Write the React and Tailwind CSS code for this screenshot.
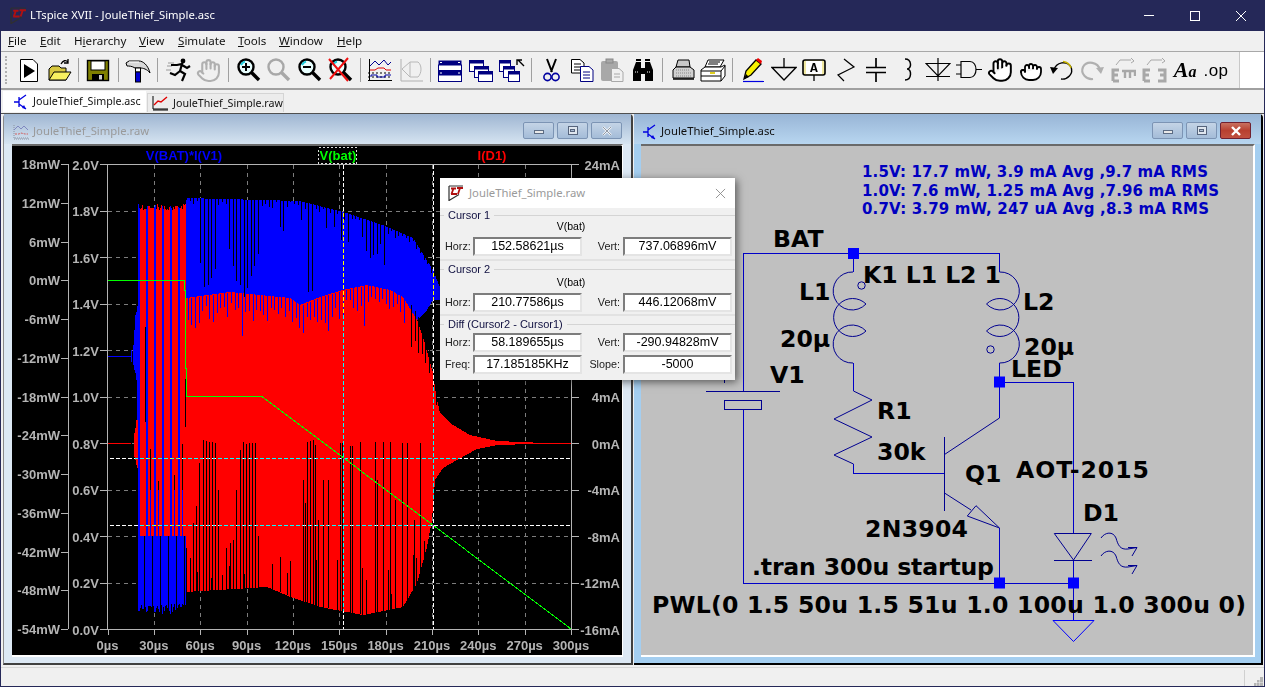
import React from 'react'
import { Hand, Grab } from 'lucide-react'

const UI = "font-['Noto_Sans',sans-serif]"
const AR = "font-['Liberation_Sans',sans-serif]"

// ---- waveform data ----
function interp(pts, x) {
  if (x <= pts[0][0]) return pts[0][1]
  for (let i = 1; i < pts.length; i++) {
    if (x <= pts[i][0]) {
      const [x0, y0] = pts[i - 1]
      const [x1, y1] = pts[i]
      return y0 + ((y1 - y0) * (x - x0)) / (x1 - x0)
    }
  }
  return pts[pts.length - 1][1]
}

const blueTop = [[186, 198], [300, 201], [343, 212], [383, 225], [413, 238], [433, 270], [445, 300]]
const blueBot = [[186, 340], [403, 312], [417, 320], [427, 310], [433, 300], [445, 300]]
const redTop = [[186, 298], [230, 292], [290, 298], [300, 305], [320, 297], [343, 290], [367, 285], [390, 290], [403, 297], [417, 320], [423, 337], [433, 373], [436, 395], [440, 413], [453, 425], [470, 435], [497, 441], [533, 442.5], [571, 443]]
const redBot = [[186, 592], [267, 587], [293, 598], [320, 607], [363, 615], [403, 607], [417, 583], [427, 547], [432, 520], [435, 480], [443, 468], [457, 460], [477, 449], [497, 445], [533, 444], [571, 444]]

const tallSpikes = [
  [193, 523], [196, 506], [199, 463], [203, 440], [206, 441], [209, 442], [212, 442], [215, 443], [218, 490],
  [230, 543], [233, 540], [236, 490], [240, 450], [243, 442], [246, 444], [249, 443], [252, 443], [255, 443], [258, 536],
  [303, 480], [305, 503], [307, 442], [310, 441], [313, 440], [315, 445], [318, 520],
  [323, 480], [328, 480], [340, 443], [342, 443], [350, 446], [352, 446], [360, 442], [375, 442], [377, 480],
  [383, 442], [390, 442], [395, 500], [402, 443], [407, 443], [414, 520], [420, 443]
]
const topClusters = [[208, 10, 296], [244, 15, 298], [310, 5, 303], [372, 10, 260]]

function vl(x, y1, y2) {
  return `M${Math.round(x) + 0.5} ${Math.round(y1)}V${Math.round(y2)}`
}

function buildTraces() {
  let seed = 4711
  const rnd = () => {
    seed = (seed * 16807) % 2147483647
    return seed / 2147483647
  }
  let blue = ''
  let red = ''
  let black = ''

  // lead-in before the oscillator starts
  blue += 'M108 356.5H131' + vl(131, 350, 362) + vl(133, 345, 365) + vl(134, 330, 370) + vl(135, 315, 373) + vl(136, 312, 380) + vl(137, 306, 420)
  red += 'M108 443.5H131' + vl(134, 433, 457) + vl(135, 428, 460) + vl(136, 420, 465) + vl(137, 410, 468)

  // start-up burst, striped
  for (let x = 138; x < 186; x++) {
    const p = (x - 138) % 8
    const tip = 204 + rnd() * 6
    if (p === 0 || p === 1) {
      blue += vl(x, tip, 604 + rnd() * 10)
    } else if (p === 4 && rnd() > 0.4) {
      red += vl(x, tip, 430 + rnd() * 60)
      blue += vl(x, 490, 536)
      blue += vl(x, 536, 600 + rnd() * 12)
    } else {
      red += vl(x, tip, 536)
      if (p === 6) black += vl(x, 536, 612)
      else blue += vl(x, 536, 604 + rnd() * 8)
      if (p === 7 && rnd() > 0.7) black += vl(x, 300 + rnd() * 100, 400 + rnd() * 80)
    }
  }

  // the long decaying part
  for (let x = 186; x < 438; x += 3.6) {
    const top = interp(blueTop, x)
    let len = rnd() > 0.85 ? 15 + rnd() * 25 : 1 + rnd() * 7
    for (const [c, hw, tipY] of topClusters) {
      const d = Math.abs(x - c) / hw
      if (d <= 1) len = Math.max(len, (tipY - top) * (1 - d * d * 0.5) * (0.85 + rnd() * 0.15))
    }
    black += vl(x, top, top + len)
    if (x < 405) blue += vl(x + 1.8, interp(redTop, x), interp(redTop, x) + 10 + rnd() * (rnd() > 0.75 ? 34 : 18))
    else if (x > 408) black += vl(x + 1.8, interp(redTop, x) - 2, interp(redTop, x) + 12 + rnd() * 30)
    if (x < 425 && rnd() > 0.55) {
      const bot = interp(redBot, x)
      black += vl(x, bot - 10 - rnd() * 40, bot)
    }
  }
  for (const [x, y] of tallSpikes) black += vl(x, y, interp(redBot, x))

  const poly = (a, b) => 'M' + a.map((p) => p.join(' ')).join('L') + 'L' + [...b].reverse().map((p) => p.join(' ')).join('L') + 'Z'
  return { blue, red, black, bluePoly: poly(blueTop, blueBot), redPoly: poly(redTop, redBot) }
}

const traces = buildTraces()

const mwTicks = [18, 12, 6, 0, -6, -12, -18, -24, -30, -36, -42, -48, -54]
const vTicks = ['2.0', '1.8', '1.6', '1.4', '1.2', '1.0', '0.8', '0.6', '0.4', '0.2', '0.0']
const maTicks = [24, 20, 16, 12, 8, 4, 0, -4, -8, -12, -16]
const timeTicks = [0, 30, 60, 90, 120, 150, 180, 210, 240, 270, 300]
const tx = (t) => 107.5 + t * 1.545
const vy = (i) => 164.5 + i * 46.5

function Chart() {
  return (
    <svg viewBox="12 146 610 509" className="block w-[610px] h-[509px]">
      <rect x="12" y="146" width="610" height="509" fill="#000" />
      <g shapeRendering="crispEdges">
        <g stroke="#7d7d7d" strokeDasharray="4 4" fill="none">
          {timeTicks.slice(1, -1).map((t) => <path key={t} d={`M${Math.round(tx(t)) + 0.5} 165V629`} />)}
          {vTicks.slice(1, -1).map((v, i) => <path key={v} d={`M108 ${Math.floor(vy(i + 1)) + 0.5}H571`} />)}
        </g>
        <path d={traces.bluePoly} fill="#0000ff" />
        <path d={traces.blue} stroke="#0000ff" fill="none" />
        <path d={traces.redPoly} fill="#ff0000" />
        <path d={traces.red} stroke="#ff0000" fill="none" />
        <path d={traces.blue} stroke="#0000ff" fill="none" />
        <path d={traces.black} stroke="#000" fill="none" />
        <path d="M107.5 280.5H184V290H185V368H186.5V396.5H262L571 629" stroke="#00ff00" fill="none" />
        <g stroke="#b4b4b4" fill="none">
          <path d="M68.5 164V629M61 164.5H68M61 629.5H68" />
          <path d="M107.5 164V629.5H571.5V164M100 164.5H571" />
          {mwTicks.map((m, i) => <path key={m} d={`M61 ${Math.floor(164.5 + i * 38.75) + 0.5}H68`} />)}
          {vTicks.map((v, i) => <path key={v} d={`M100 ${Math.floor(vy(i)) + 0.5}H107`} />)}
          {maTicks.map((m, i) => <path key={m} d={`M572 ${Math.floor(vy(i)) + 0.5}H579`} />)}
          {timeTicks.map((t) => <path key={t} d={`M${Math.round(tx(t)) + 0.5} 630V635`} />)}
        </g>
        <g stroke="#fff" strokeDasharray="4 2" fill="none" className="mix-blend-difference">
          <path d="M343.5 165V629" />
          <path d="M433.5 165V629" />
          <path d="M110 458.5H571" />
          <path d="M110 525.5H571" />
        </g>
        <rect x="318.5" y="147.5" width="38" height="16" fill="#000" stroke="#ddd" strokeDasharray="2 2" />
      </g>
      <g className={AR} fontSize="13" fontWeight="700">
        <g fill="#b4b4b4">
          {mwTicks.map((m, i) => <text key={m} x="60" y={169 + i * 38.75} textAnchor="end">{m}mW</text>)}
          {vTicks.map((v, i) => <text key={v} x="99" y={vy(i) + 5} textAnchor="end">{v}V</text>)}
          {maTicks.map((m, i) => (vy(i) > 178 && vy(i) < 380 ? null : <text key={m} x="620" y={vy(i) + 5} textAnchor="end">{m}mA</text>))}
          {timeTicks.map((t) => <text key={t} x={tx(t)} y="650" textAnchor="middle">{t}µs</text>)}
        </g>
        <text x="184" y="160" textAnchor="middle" fill="#0000ff">V(BAT)*I(V1)</text>
        <text x="338" y="160" textAnchor="middle" fill="#00ff00">V(bat)</text>
        <text x="492" y="160" textAnchor="middle" fill="#ff0000">I(D1)</text>
      </g>
    </svg>
  )
}

// ---- schematic ----
const coil = (cx, dir) => {
  const s = dir < 0 ? 0 : 1
  const d = 13 * dir * -1
  return `M${cx} 272A19 19 0 1 ${s} ${cx + d} 304A19 19 0 1 ${s} ${cx + d} 331A19 19 0 1 ${s} ${cx} 363`
}

function Junction({ x, y }) {
  return <rect x={x - 5.5} y={y - 5.5} width="11" height="11" fill="#0000ff" />
}

function Label({ x, y, w, children }) {
  return <text x={x} y={y} fontSize="23.6" fontWeight="700" fill="#000" textLength={w} lengthAdjust={w ? 'spacing' : undefined}>{children}</text>
}

function Schematic() {
  return (
    <svg viewBox="641 146 612 509" className="block w-[612px] h-[509px] font-['DejaVu_Sans',sans-serif]">
      <rect x="641" y="146" width="612" height="509" fill="#c0c0c0" />
      <g fill="none" stroke="#0000c8" shapeRendering="crispEdges">
        <path d="M743.5 391V253.5H999.5V272" />
        <path d="M853.5 253.5V272" />
        <path d="M853.5 363V391" />
        <path d="M999.5 363V418" />
        <path d="M999.5 382H1073.5V533" />
        <path d="M743.5 409V583.5H1073.5" />
        <path d="M999.5 528V583" />
        <path d="M1073.5 560V620" />
        <path d="M853.5 464V473.5H944" />
      </g>
      <g fill="none" stroke="#000090">
        <path d={coil(853, -1)} />
        <path d={coil(999.5, 1)} />
        <circle cx="861.5" cy="285.5" r="3.7" />
        <circle cx="990.5" cy="349.5" r="3.7" />
        <path d="M706 391.5H780" shapeRendering="crispEdges" />
        <rect x="724.5" y="400.5" width="37" height="9" shapeRendering="crispEdges" />
        <path d="M724.5 379V383" shapeRendering="crispEdges" />
        <path d="M853.5 391L872 400L834 419L872 437L834 455L853.5 464" />
        <path d="M944.5 437V511" shapeRendering="crispEdges" />
        <path d="M944.5 454.5L999.5 418" />
        <path d="M944.5 493L971 510" />
        <path d="M976 505.7L967.3 516L999.5 528Z" />
        <path d="M1054.3 533.5H1091.3L1073.5 560Z" />
        <path d="M1054 560.5H1092" shapeRendering="crispEdges" />
        <path d="M1101 538C1105 532 1113 531 1116 538C1118 545 1120 550 1128 549L1137 547.5M1137 547.5L1128 547.5M1137 547.5L1132 556" />
        <path d="M1101 556C1105 550 1113 549 1116 556C1118 563 1120 568 1128 567L1137 565.5M1137 565.5L1128 565.5M1137 565.5L1132 574" />
      </g>
      <path d="M1053 620.5H1094L1073.5 641.5Z" fill="none" stroke="#0000ff" />
      <Junction x={853.5} y={253.5} />
      <Junction x={999.5} y={382} />
      <Junction x={999.5} y={583} />
      <Junction x={1073.5} y={583} />
      <g fontSize="15" fontWeight="700" fill="#0000c0">
        <text x="862" y="177" textLength="346" lengthAdjust="spacing">1.5V: 17.7 mW, 3.9 mA Avg ,9.7 mA RMS</text>
        <text x="862" y="196" textLength="357" lengthAdjust="spacing">1.0V: 7.6 mW, 1.25 mA Avg ,7.96 mA RMS</text>
        <text x="862" y="214" textLength="347" lengthAdjust="spacing">0.7V: 3.79 mW, 247 uA Avg ,8.3 mA RMS</text>
      </g>
      <Label x={773} y={247}>BAT</Label>
      <Label x={863} y={283} w={138}>K1 L1 L2 1</Label>
      <Label x={799} y={300}>L1</Label>
      <Label x={780} y={347}>20µ</Label>
      <Label x={1023} y={310}>L2</Label>
      <Label x={1024} y={355}>20µ</Label>
      <Label x={1011} y={377}>LED</Label>
      <Label x={770} y={383}>V1</Label>
      <Label x={877} y={419}>R1</Label>
      <Label x={877} y={460}>30k</Label>
      <Label x={965} y={482}>Q1</Label>
      <Label x={1016} y={478} w={133}>AOT-2015</Label>
      <Label x={1083} y={521}>D1</Label>
      <Label x={865} y={537} w={103}>2N3904</Label>
      <Label x={752} y={575} w={242}>.tran 300u startup</Label>
      <Label x={652} y={613} w={594}>PWL(0 1.5 50u 1.5 51u 1.0 100u 1.0 300u 0)</Label>
    </svg>
  )
}

// ---- toolbar icons ----
const Ic = ({ children, w = 26, h = 26 }) => (
  <svg viewBox={`0 0 ${w} ${h}`} width={w} height={h} className="block">{children}</svg>
)

const Lens = ({ gray, children }) => {
  const c = gray ? '#a8a8a8' : '#000'
  return (
    <Ic>
      <circle cx="10" cy="10" r="7.5" fill={gray ? '#f0f0f0' : '#e8ffff'} stroke={c} strokeWidth="2.4" />
      <path d="M15.5 15.5L23 23" stroke={c} strokeWidth="3.4" />
      {!gray && <path d="M5 8C6 6 7 5 9 4.5" stroke="#20d0e0" strokeWidth="2" fill="none" />}
      {children}
    </Ic>
  )
}

const WinIcon = ({ x, y, w = 12, h = 9 }) => (
  <g>
    <rect x={x + 0.5} y={y + 0.5} width={w} height={h} fill="#fff" stroke="#000080" />
    <rect x={x + 0.5} y={y + 0.5} width={w} height="3" fill="#000080" />
  </g>
)

const tools = [
  <Ic key="run"><path d="M5.5 2.5H18L22.5 7V24.5H5.5Z" fill="#fff" stroke="#000" /><path d="M9 7L20 14L9 21Z" fill="#000" /></Ic>,
  <Ic key="open"><path d="M3 23V12L6 9H13L15 11H20V23Z" fill="#d8c840" stroke="#000" /><path d="M3 23L8 15H25L20 23Z" fill="#f8f060" stroke="#000" /><path d="M15 7C17 3 20 3 22 5M22 2V6H18" fill="none" stroke="#000" strokeWidth="1.3" /></Ic>,
  'sep',
  <Ic key="save"><rect x="2.5" y="3.5" width="21" height="20" fill="#808000" stroke="#000" strokeWidth="1.4" /><rect x="6" y="4" width="14" height="9" fill="#fff" stroke="#000" /><rect x="7" y="17" width="12" height="6.5" fill="#000" /><rect x="14" y="18" width="3" height="4.5" fill="#d0d0d0" /></Ic>,
  'sep',
  <Ic key="build"><path d="M1 6L4 4H14C18 4 23 8 25 16C22 12 18 11 15 11H10C7 9 4 9 2 9Z" fill="#d8d8d8" stroke="#000" /><path d="M4 5H14" stroke="#fff" /><rect x="10.5" y="11" width="5" height="4" fill="#fff" stroke="#000" /><rect x="10.5" y="15" width="5" height="10" fill="#0000d0" stroke="#000" /></Ic>,
  'sep',
  <Ic key="man"><path d="M3 6H9M2 9H7M1 13H6" stroke="#9a9a9a" /><circle cx="18" cy="4" r="2.4" fill="#000" /><path d="M6 8H12L17 7L15 14L20 17L17 24M15 14L10 18L5 16M17 8L22 11L25 9" fill="none" stroke="#000" strokeWidth="2.2" /></Ic>,
  <Hand key="halt" size={25} color="#b0b0b0" strokeWidth={2} />,
  'sep2',
  <Lens key="zi"><path d="M6 10H14M10 6V14" stroke="#000" strokeWidth="2" /></Lens>,
  <Lens key="zg" gray />,
  <Lens key="zo"><path d="M6 10H14" stroke="#000" strokeWidth="2" /></Lens>,
  <Lens key="zx"><path d="M1 2L20 24M20 1L2 22" stroke="#f01010" strokeWidth="2" /></Lens>,
  'sep',
  <Ic key="plot"><path d="M2.5 2V24M1 23.5H25" stroke="#000" /><path d="M1 16H25M1 20H25" stroke="#000" strokeDasharray="2 2" /><path d="M3 9L8 4L12 8L17 3L21 8L24 5" stroke="#000090" fill="none" /><path d="M3 13H8L11 11H17L19 13H24" stroke="#e00000" fill="none" /><path d="M4 20V18H10V20H18V18H24" stroke="#0000a0" fill="none" /></Ic>,
  <Ic key="bode"><path d="M3 2V24H25" stroke="#b0b0b0" fill="none" /><path d="M4 12L12 5H20C24 8 24 16 20 20H12L4 12ZM12 5V20" stroke="#b8b8b8" fill="none" /></Ic>,
  'sep',
  <Ic key="tile"><rect x="1.5" y="3.5" width="23" height="10" fill="#000080" /><rect x="1.5" y="8" width="23" height="5.5" fill="#fff" stroke="#000080" /><rect x="1.5" y="14.5" width="23" height="10" fill="#fff" stroke="#000080" /><rect x="1.5" y="14.5" width="23" height="4" fill="#000080" /><path d="M3 5.5H5M21 5.5H23M3 16H5M21 16H23" stroke="#fff" /></Ic>,
  <Ic key="casc"><WinIcon x={1} y={3} w={14} h={11} /><WinIcon x={6} y={9} w={14} h={11} /><WinIcon x={10} y={14} w={14} h={10} /></Ic>,
  <Ic key="casc2"><WinIcon x={0} y={3} w={11} h={11} /><WinIcon x={4} y={9} w={11} h={11} /><WinIcon x={9} y={14} w={11} h={10} /><path d="M25 9L19 3M18 8V3H23" fill="none" stroke="#000" strokeWidth="1.4" /></Ic>,
  'sep',
  <Ic key="cut"><path d="M9 2L14 15M18 2L13 15" stroke="#000" strokeWidth="2" /><circle cx="9.5" cy="20" r="3.6" fill="none" stroke="#0000a0" strokeWidth="1.6" /><circle cx="17.5" cy="20" r="3.6" fill="none" stroke="#0000a0" strokeWidth="1.6" /></Ic>,
  <Ic key="copy"><path d="M2.5 2.5H11L15 6V16H2.5Z" fill="#fff" stroke="#000" /><path d="M5 7H12M5 10H12M5 13H12" stroke="#000" /><path d="M11.5 9.5H20L24 13V24.5H11.5Z" fill="#fff" stroke="#000080" /><path d="M14 15H21M14 18H21M14 21H21" stroke="#000080" /></Ic>,
  <Ic key="paste"><rect x="2" y="4" width="17" height="20" rx="2" fill="#a8a8a8" /><rect x="7" y="2" width="7" height="4" fill="#a8a8a8" stroke="#888" /><path d="M12.5 11.5H20L24 15V24.5H12.5Z" fill="#f0f0f0" stroke="#a8a8a8" /><path d="M15 17H21M15 20H21" stroke="#a8a8a8" /></Ic>,
  <Ic key="find"><path d="M3 24V13L6 5H11V24ZM15 24V5H20L23 13V24ZM11 11H15V17H11Z" fill="#000" /><path d="M5 15H9M17 15H21M7 3H10M16 3H19" stroke="#fff" strokeDasharray="1 1" /><path d="M6 3H11M15 3H20" stroke="#000" strokeWidth="2" /></Ic>,
  'sep',
  <Ic key="prev"><path d="M8 3H19L20 10H6Z" fill="#c8c8c8" stroke="#000" /><path d="M3 13L6 10H20L24 13V21H3Z" fill="#d0d0d0" stroke="#000" /><path d="M3 22H24" stroke="#000" strokeWidth="1.5" /><path d="M6 13H20M6 16H22M6 19H22" stroke="#888" strokeDasharray="1 1" /></Ic>,
  <Ic key="print"><path d="M8 3H24L20 10H5Z" fill="#fff" stroke="#000" /><path d="M9 5H20M8 7H18" stroke="#000" /><path d="M1 13L5 10H21L25 8V19L21 24H1Z" fill="#fff" stroke="#000" /><path d="M1 14H21V24M21 14L25 9" stroke="#000" fill="none" /><path d="M1 19H21" stroke="#000" /><path d="M10 16H15" stroke="#e0d020" strokeWidth="2" /></Ic>,
  'sep',
  <Ic key="label"><path d="M4 22L6 14L16 3L21 7L11 18Z" fill="#f8f000" stroke="#000" strokeWidth="1.3" /><path d="M16 3L18 1L22 4L21 7Z" fill="#f00000" /><path d="M4 22L6 17L9 20Z" fill="#000" /><path d="M3 24.5H24" stroke="#0000e0" strokeWidth="1.2" /></Ic>,
  <Ic key="gnd"><path d="M13 1V10M1 10.5H25L13 23Z" fill="none" stroke="#000" strokeWidth="1.3" /></Ic>,
  <Ic key="netlabel"><rect x="2" y="3" width="22" height="15" rx="2" fill="#f0e8a0" stroke="#000" strokeWidth="1.6" /><rect x="5" y="4" width="16" height="13" fill="#fff" /><text x="13" y="15" textAnchor="middle" fontSize="13" fontWeight="700" fontFamily="Liberation Mono" fill="#000">A</text><path d="M13 18V24" stroke="#000" strokeWidth="1.3" /></Ic>,
  <Ic key="res"><path d="M12 2L22 10L6 18L12 24" fill="none" stroke="#000" strokeWidth="1.2" /></Ic>,
  <Ic key="cap"><path d="M13 1V10M13 16V25M3 10.5H23M3 15.5H23" stroke="#000" strokeWidth="1.7" /></Ic>,
  <Ic key="ind"><path d="M11 2C18 2 18 12 13 12C18 12 18 23 11 23" fill="none" stroke="#000" strokeWidth="1.5" /></Ic>,
  <Ic key="dio"><path d="M13 1V24M1 6.5H25L13 19ZM1 19.5H25" fill="none" stroke="#000" strokeWidth="1.2" /></Ic>,
  <Ic key="comp"><path d="M0 8H5M0 17H5M5 4.5H14C22 4.5 22 20.5 14 20.5H5ZM20 12.5H26" fill="none" stroke="#000" strokeWidth="1.2" /></Ic>,
  <Hand key="move" size={26} color="#000" fill="#fff" strokeWidth={1.8} />,
  <Grab key="drag" size={24} color="#000" fill="#fff" strokeWidth={1.8} />,
  <Ic key="undo"><path d="M5 13C7 5 18 3 22 10C25 17 18 23 12 22" fill="none" stroke="#000" strokeWidth="1.4" /><path d="M14 4.5C18 5 21 7 22 11" fill="none" stroke="#c8b400" strokeWidth="1.4" /><path d="M1 10L9 11L4 17Z" fill="#000" /></Ic>,
  <Ic key="redo"><path d="M21 13C19 5 8 3 4 10C1 17 8 23 14 22" fill="none" stroke="#b0b0b0" strokeWidth="2.2" /><path d="M25 10L17 11L22 17Z" fill="#b0b0b0" /></Ic>,
  <Ic key="mirror"><path d="M3 24V13H9M3 18H8M3 24H9" fill="none" stroke="#a8a8a8" strokeWidth="3" /><path d="M12 14H25V19M15 14V21M20 14V21" fill="none" stroke="#a8a8a8" strokeWidth="2.4" /><path d="M6 8L10 3H21M21 1L24 4L21 6" fill="none" stroke="#a8a8a8" /></Ic>,
  <Ic key="flip"><path d="M3 24V13H9M3 18H8M3 24H9M17 13H24V24H17M24 18H19" fill="none" stroke="#a8a8a8" strokeWidth="3" /><path d="M6 8L10 3H21M21 1L24 4L21 6" fill="none" stroke="#a8a8a8" /></Ic>,
  <span key="aa" className="font-['Liberation_Serif',serif] font-bold italic text-[22px] leading-none text-black">A<span className="text-[16px]">a</span></span>,
  <span key="op" className={`${AR} text-[17px] leading-none text-black tracking-[0.5px]`}>.op</span>
]
const labelIdx = tools.findIndex((t) => t.key === 'label')

function Toolbar() {
  return (
    <div className="flex items-center h-[36px]">
      <div className="flex items-center h-full flex-1 pl-[4px] border-r border-[#c8c8c8]">
        <div className="w-[3px] h-[28px] mr-[5px] border-l-2 border-dotted border-[#b0b0b0]" />
        {tools.map((t, i) => {
          if (t === 'sep') return <div key={i} className="w-[9px] flex justify-center"><div className="w-px h-[24px] bg-[#a0a0a0]" /></div>
          if (t === 'sep2') return <div key={i} className="w-[10px] flex justify-center"><div className="w-px h-[24px] bg-[#a0a0a0]" /></div>
          return <div key={i} className={`${i > labelIdx ? 'w-[30.9px]' : 'w-[30.6px]'} h-[30px] flex items-center justify-center`}>{t}</div>
        })}
      </div>
      <div className="w-[24px] h-full bg-white" />
    </div>
  )
}

// ---- small bits ----
function LtLogo({ size = 16 }) {
  return (
    <svg viewBox="0 0 16 16" width={size} height={size} className="block shrink-0">
      <path d="M1 1L1 15.5L11 9.5" fill="none" stroke="#303030" strokeWidth="1.2" />
      <path d="M1 1H15" stroke="#303030" strokeWidth="1" />
      <path d="M3 3.5H8M5.5 3.5L3.5 9M9 3H15M12 3L10 9M3 9L9 9" fill="none" stroke="#b01010" strokeWidth="1.8" />
    </svg>
  )
}

function NpnIcon() {
  return (
    <svg viewBox="0 0 14 16" width="14" height="16" className="block shrink-0">
      <path d="M0 8H5M5 3V13M5 6L12 1M5 10L12 15" fill="none" stroke="#0000e0" strokeWidth="1.3" />
      <path d="M12 15L8 14L10 11Z" fill="#0000e0" />
    </svg>
  )
}

function PlotIcon({ faint }) {
  return (
    <svg viewBox="0 0 16 16" width="16" height="16" className="block shrink-0">
      <path d="M1 1V14H16M1 15H16" stroke={faint ? '#8890a0' : '#000'} strokeDasharray={faint ? '1 1' : 'none'} fill="none" />
      {faint ? (
        <>
          <path d="M1 6L5 2L8 5L11 2L15 6" fill="none" stroke="#8088c0" />
          <path d="M2 10H6L8 9L12 10H15" fill="none" stroke="#d06060" strokeDasharray="2 1" />
        </>
      ) : (
        <path d="M2 10L6 6L9 7L15 2" fill="none" stroke="#e00000" strokeWidth="1.4" />
      )}
    </svg>
  )
}

function MdiButton({ kind, red }) {
  return (
    <div className={`w-[31px] h-[17px] rounded-[2px] border flex items-center justify-center ${red ? 'bg-gradient-to-b from-[#c87060] via-[#b84030] to-[#c05040] border-[#702030]' : 'bg-gradient-to-b from-[#c4d4e6] to-[#a4bcd8] border-[#7c94b4]'}`}>
      {kind === 'min' && <div className="w-[10px] h-[4px] mt-[3px] bg-[#e8e8e8] border border-[#5c6c84]" />}
      {kind === 'max' && <div className="w-[10px] h-[9px] bg-[#dfe6ee] border border-[#56647c] flex items-center justify-center"><div className="w-[5px] h-[3px] bg-[#a9bbd3] border border-[#56647c]" /></div>}
      {kind === 'close' && (
        <svg viewBox="0 0 12 10" width="12" height="10"><path d="M2 1L10 9M10 1L2 9" stroke={red ? '#fff' : '#eef2f6'} strokeWidth="2.4" /><path d="M2 1L10 9M10 1L2 9" stroke={red ? '#fff' : '#6a7484'} strokeWidth="0.7" /></svg>
      )}
    </div>
  )
}

function MdiTitle({ icon, title, tone, close }) {
  return (
    <div className="h-[30px] flex items-center pt-[3px]">
      <div className="mt-[2px] flex items-center">
        {icon}
        <span className={`${UI} text-[11.3px] ml-[4px] ${tone}`}>{title}</span>
      </div>
      <div className="ml-auto flex gap-[3px]">
        <MdiButton kind="min" />
        <MdiButton kind="max" />
        <MdiButton kind="close" red={close} />
      </div>
    </div>
  )
}

function Field({ children }) {
  return (
    <div className={`${AR} w-[109px] h-[19px] bg-white border-2 border-t-[#7d7d7d] border-l-[#7d7d7d] border-r-[#e4e4e4] border-b-[#e4e4e4] flex items-center justify-center text-[12.5px] leading-none text-black`}>
      {children}
    </div>
  )
}

function Row({ l1, v1, l2, v2, className = '' }) {
  return (
    <div className={`flex items-center text-[10.8px] text-[#202020] ${className}`}>
      <span className="w-[33px] pl-[5px]">{l1}</span>
      <Field>{v1}</Field>
      <span className="w-[41px] pr-[3px] text-right">{l2}</span>
      <Field>{v2}</Field>
    </div>
  )
}

function GroupHead({ children }) {
  return (
    <div className="flex items-center h-[14px] text-[11px] text-[#101040]">
      <div className="w-[4px] h-px bg-[#d4d4d4]" />
      <span className="px-[4px]">{children}</span>
      <div className="flex-1 h-px bg-[#d4d4d4]" />
    </div>
  )
}

function CursorDialog() {
  return (
    <div className={`${AR} absolute left-[439px] top-[64px] w-[295px] h-[202px] bg-[#f0f0f0] shadow-[2px_2px_8px_rgba(0,0,0,0.55)]`}>
      <div className="h-[30px] bg-white flex items-center pl-[8px] pr-[9px]">
        <LtLogo />
        <span className={`${UI} text-[11.3px] text-[#9a9a9a] ml-[5px]`}>JouleThief_Simple.raw</span>
        <svg viewBox="0 0 12 12" width="11" height="11" className="ml-auto"><path d="M1 1L11 11M11 1L1 11" stroke="#8c8c8c" strokeWidth="1" /></svg>
      </div>
      <div className="h-[53px] border-b-2 border-[#e2e2e2]">
        <GroupHead>Cursor 1</GroupHead>
        <div className="h-[15px] text-center text-[10.5px] leading-[8px] pr-[33px]">V(bat)</div>
        <Row l1="Horz:" v1="152.58621µs" l2="Vert:" v2="737.06896mV" />
      </div>
      <div className="h-[55px] border-b-2 border-[#e2e2e2]">
        <div className="h-[1px]" />
        <GroupHead>Cursor 2</GroupHead>
        <div className="h-[17px] text-center text-[10.5px] leading-[12px] pr-[33px]">V(bat)</div>
        <Row l1="Horz:" v1="210.77586µs" l2="Vert:" v2="446.12068mV" />
      </div>
      <div className="pt-[1px]">
        <GroupHead>Diff (Cursor2 - Cursor1)</GroupHead>
        <Row className="mt-[2px]" l1="Horz:" v1="58.189655µs" l2="Vert:" v2="-290.94828mV" />
        <Row className="mt-[3px]" l1="Freq:" v1="17.185185KHz" l2="Slope:" v2="-5000" />
      </div>
    </div>
  )
}

const menus = [
  ['', 'F', 'ile', 'w-[32px]'],
  ['', 'E', 'dit', 'w-[34px]'],
  ['H', 'i', 'erarchy', 'w-[65px]'],
  ['', 'V', 'iew', 'w-[39px]'],
  ['', 'S', 'imulate', 'w-[60px]'],
  ['', 'T', 'ools', 'w-[41px]'],
  ['', 'W', 'indow', 'w-[58px]'],
  ['', 'H', 'elp', 'w-[40px]']
]

export default function App() {
  return (
    <div className={`${UI} h-[687px] w-[1265px] overflow-hidden flex flex-col bg-[#f0f0f0] border-x border-b border-[#252858]`}>
      {/* title bar */}
      <div className="h-[31px] shrink-0 bg-[#252858] flex items-center pl-[9px]">
        <LtLogo size={17} />
        <span className="ml-[3px] text-[11.25px] text-white">LTspice XVII - JouleThief_Simple.asc</span>
        <div className="ml-auto flex items-center">
          <div className="w-[46px] flex justify-center"><div className="w-[10px] h-px bg-white" /></div>
          <div className="w-[46px] flex justify-center"><div className="w-[10px] h-[10px] border border-white" /></div>
          <div className="w-[46px] flex justify-center">
            <svg viewBox="0 0 10 10" width="10" height="10"><path d="M0 0L10 10M10 0L0 10" stroke="#fff" /></svg>
          </div>
        </div>
      </div>

      {/* menu */}
      <div className="h-[21px] shrink-0 flex items-center pl-[7px] border-b border-[#a8a8a8] text-[11.6px] text-[#111]">
        {menus.map(([pre, u, rest, w]) => (
          <span key={u + rest} className={w}>{pre}<span className="underline">{u}</span>{rest}</span>
        ))}
      </div>

      <div className="shrink-0 border-b-2 border-[#a0a0a0]">
        <Toolbar />
      </div>

      {/* document tabs */}
      <div className={`${UI} h-[23px] shrink-0 flex items-end pl-[2px] pb-[1px] text-[10.7px] text-[#111]`}>
        <div className="w-[143px] h-[21px] bg-white flex items-center pl-[11px] gap-[5px]">
          <NpnIcon />
          <span>JouleThief_Simple.asc</span>
        </div>
        <div className="w-[137px] h-[19px] ml-[1px] bg-[#ececec] border border-b-0 border-[#d4d4d4] flex items-center pl-[4px] gap-[5px]">
          <PlotIcon />
          <span>JouleThief_Simple.raw</span>
        </div>
      </div>

      {/* MDI area */}
      <div className="relative flex-1 border-t border-[#505050] flex pl-[2px] pr-[2px] pb-[2px]">
        <div className="w-[630px] h-[551px] rounded-t-[4px] border-l border-r-2 border-b-2 border-l-[#8a8a8a] border-r-[#404040] border-b-[#404040] bg-[#dce8f4] pl-[8px] pr-[8px] flex flex-col">
          <div className="-ml-[8px] -mr-[8px] pl-[9px] pr-[9px] bg-gradient-to-b from-[#9fb6d2] to-[#d6e4f1]">
            <MdiTitle icon={<PlotIcon faint />} title="JouleThief_Simple.raw" tone="text-[#9a9a9a]" />
          </div>
          <div className="border-t-2 border-[#6a6a6a] border-b-2 border-b-white border-r-2 border-r-white">
            <Chart />
          </div>
        </div>
        <div className="flex-1 h-[551px] ml-[1px] rounded-t-[4px] border-r-2 border-b-2 border-r-black border-b-black bg-[#a4cef0] pl-[7px] pr-[6px] flex flex-col">
          <div className="-ml-[7px] -mr-[6px] pl-[9px] pr-[10px] bg-gradient-to-b from-[#98b5d6] to-[#b8d6f0]">
            <MdiTitle icon={<NpnIcon />} title="JouleThief_Simple.asc" tone="text-[#101010]" close />
          </div>
          <div className="border-t-2 border-[#6a6a6a] border-b-2 border-b-white border-r-2 border-r-white w-fit">
            <Schematic />
          </div>
        </div>
        <CursorDialog />
      </div>

      {/* status bar */}
      <div className="h-[20px] shrink-0 border-t border-[#d8d8d8] flex items-center justify-end">
        <div className="w-px h-[16px] bg-[#d0d0d0] mr-[9px]" />
        <svg viewBox="0 0 9 9" width="9" height="9" className="mt-[7px] mr-px">
          <path d="M6 0h3v3h-3zM3 3h2.5v2.5h-2.5zM6 3h3v2.5h-3zM0 6h2.5v3h-2.5zM3 6h2.5v3h-2.5zM6 6h3v3h-3z" fill="#b4b4b4" />
        </svg>
      </div>
    </div>
  )
}
